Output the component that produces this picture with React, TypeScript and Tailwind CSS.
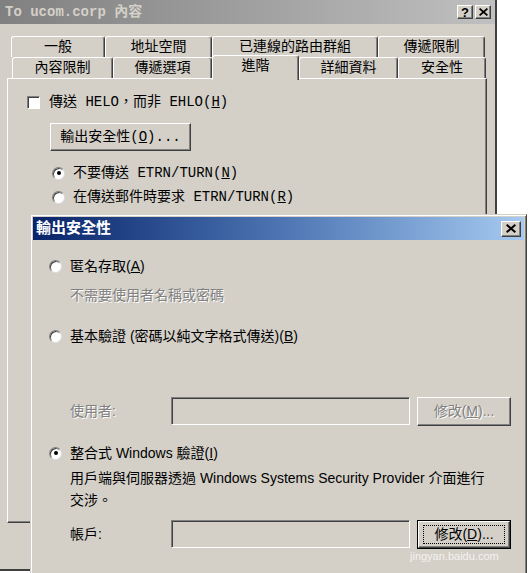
import type { ReactNode } from 'react'

// Win2000-style property sheet with the "輸出安全性" dialog on top

const mono = "font-['Liberation_Mono','Noto_Sans_CJK_TC',monospace]"
const sans = "font-['Liberation_Sans','Noto_Sans_CJK_TC',sans-serif]"

const raised =
  'bg-[#d4d0c8] border border-t-white border-l-white border-r-[#404040] border-b-[#404040] shadow-[inset_-1px_-1px_0_#808080]'
const sunken =
  'border border-t-[#808080] border-l-[#808080] border-r-white border-b-white shadow-[inset_1px_1px_0_#404040]'
const grayed = 'text-[#808080] [text-shadow:1px_1px_0_#fff]'

const backTabs = [
  { label: '一般', w: 'w-[94px]' },
  { label: '地址空間', w: 'w-[107px]' },
  { label: '已連線的路由群組', w: 'w-[166px]' },
  { label: '傳遞限制', w: 'w-[107px]' },
]

const frontTabs = [
  { label: '內容限制', w: 'w-[101px]' },
  { label: '傳遞選項', w: 'w-[99px]' },
  { label: '進階', w: 'w-[87px]', active: true },
  { label: '詳細資料', w: 'w-[99px]' },
  { label: '安全性', w: 'w-[88px]' },
]

function Tab({ label, w, active }: { label: string; w: string; active?: boolean }) {
  return (
    <div
      className={[
        'flex items-center justify-center bg-[#d4d0c8] rounded-t-[3px]',
        'border-t border-l border-white border-r border-r-[#404040] shadow-[inset_-1px_0_0_#808080]',
        active ? 'h-[25px] -mb-[2px] relative z-10 pb-[4px]' : 'h-[21px]',
        w,
      ].join(' ')}
    >
      {label}
    </div>
  )
}

function Radio({ checked }: { checked?: boolean }) {
  return (
    <span className="grid place-items-center w-[13px] h-[13px] shrink-0 rounded-full bg-white border border-t-[#808080] border-l-[#808080] border-r-[#dcdcdc] border-b-[#dcdcdc] shadow-[inset_1px_1px_0_#404040]">
      {checked && <span className="w-[4px] h-[4px] rounded-full bg-black" />}
    </span>
  )
}

function Cross({ size }: { size: number }) {
  return (
    <svg width={size} height={size - 1} viewBox="0 0 8 7">
      <path d="M0.5 0.5 7.5 6.5M7.5 0.5 0.5 6.5" stroke="#000" strokeWidth="1.6" />
    </svg>
  )
}

function CapButton({ children }: { children: ReactNode }) {
  return (
    <span className={`grid place-items-center w-[16px] h-[14px] text-[13px] leading-none font-bold text-black font-['Liberation_Sans',sans-serif] ${raised}`}>
      {children}
    </span>
  )
}

function Field() {
  return <div className={`w-[239px] h-[28px] bg-[#d4d0c8] ${sunken}`} />
}

function PropertySheet() {
  return (
    <div className={`w-[497px] h-[571px] bg-[#d4d0c8] border-r-2 border-b-2 border-[#404040] ${mono} text-[14px] text-black`}>
      <div className="h-[24px] flex items-center justify-between pl-[5px] pr-[4px] bg-linear-to-r from-[#808080] to-[#c0c0c0]">
        <span className="font-bold text-[#d4d0c8] text-[14px]">To ucom.corp 內容</span>
        <div className="flex gap-[2px]">
          <CapButton>?</CapButton>
          <CapButton>
            <Cross size={9} />
          </CapButton>
        </div>
      </div>

      <div className="mt-[12px] ml-[11px] flex">
        {backTabs.map(t => (
          <Tab key={t.label} {...t} />
        ))}
      </div>
      <div className="ml-[12px] flex items-end h-[21px]">
        {frontTabs.map(t => (
          <Tab key={t.label} {...t} />
        ))}
      </div>

      <div className="ml-[7px] w-[480px] h-[445px] border border-t-white border-l-white border-r-[#404040] border-b-[#404040] shadow-[inset_-1px_-1px_0_#808080] pl-[19px] pt-[17px]">
        <div className="flex items-center gap-[9px] h-[13px]">
          <span className={`w-[13px] h-[13px] bg-white ${sunken}`} />
          <span>傳送 HELO，而非 EHLO(<u>H</u>)</span>
        </div>
        <div className={`mt-[14px] ml-[23px] w-[141px] h-[28px] grid place-items-center ${raised}`}>
          <span>輸出安全性(<u>O</u>)...</span>
        </div>
        <div className="mt-[14px] ml-[25px] flex flex-col gap-[8px]">
          <div className="flex items-center gap-[8px] h-[16px]">
            <Radio checked />
            <span>不要傳送 ETRN/TURN(<u>N</u>)</span>
          </div>
          <div className="flex items-center gap-[8px] h-[16px]">
            <Radio />
            <span>在傳送郵件時要求 ETRN/TURN(<u>R</u>)</span>
          </div>
        </div>
      </div>
    </div>
  )
}

function OutboundSecurity() {
  return (
    <div
      className={`absolute left-[30px] top-[214px] w-[497px] h-[380px] bg-[#d4d0c8] p-[2px] border border-t-[#d4d0c8] border-l-[#d4d0c8] border-r-[#404040] border-b-[#404040] shadow-[inset_1px_1px_0_#fff,inset_-1px_-1px_0_#808080] ${sans} text-[14px] text-black`}
    >
      <div className="h-[23px] flex items-center justify-between pl-[3px] pr-[3px] bg-linear-to-r from-[#0a246a] via-[#4d74b2] to-[#a6caf0]">
        <span className="font-bold text-white text-[15px]">輸出安全性</span>
        <span className={`grid place-items-center w-[20px] h-[16px] ${raised}`}>
          <Cross size={10} />
        </span>
      </div>

      <div className="pl-[16px]">
        <div className="mt-[16px] flex items-center gap-[8px] h-[20px]">
          <Radio />
          <span>匿名存取(<u>A</u>)</span>
        </div>
        <div className={`mt-[9px] ml-[21px] h-[20px] leading-[20px] ${grayed}`}>不需要使用者名稱或密碼</div>

        <div className="mt-[21px] flex items-center gap-[8px] h-[20px]">
          <Radio />
          <span>基本驗證 (密碼以純文字格式傳送)(<u>B</u>)</span>
        </div>

        <div className="mt-[51px] ml-[21px] flex items-center h-[28px]">
          <span className={`w-[101px] ${grayed}`}>使用者:</span>
          <Field />
          <span className={`ml-[7px] w-[94px] h-[29px] grid place-items-center ${raised}`}>
            <span className={grayed}>
              修改(<u>M</u>)...
            </span>
          </span>
        </div>

        <div className="mt-[18px] flex items-center gap-[8px] h-[20px]">
          <Radio checked />
          <span>整合式 Windows 驗證(<u>I</u>)</span>
        </div>
        <p className="mt-[4px] ml-[21px] w-[420px] leading-[22px]">
          用戶端與伺服器透過 Windows Systems Security Provider 介面進行交涉。
        </p>

        <div className="mt-[9px] ml-[21px] flex items-center h-[28px]">
          <span className="w-[101px]">帳戶:</span>
          <Field />
          <span className="ml-[7px] w-[94px] h-[29px] border border-black">
            <span className={`w-full h-full grid place-items-center ${raised}`}>
              <span className="border border-dotted border-black px-[10px] leading-[17px]">
                修改(<u>D</u>)...
              </span>
            </span>
          </span>
        </div>
      </div>
    </div>
  )
}

export default function App() {
  return (
    <div className="relative w-[529px] h-[573px] overflow-hidden bg-white">
      <PropertySheet />
      <OutboundSecurity />
      {/* site watermark */}
      <span className="absolute left-[410px] top-[551px] text-[11px] leading-none text-white/75 font-['Liberation_Sans',sans-serif] pointer-events-none">
        jingyan.baidu.com
      </span>
    </div>
  )
}
